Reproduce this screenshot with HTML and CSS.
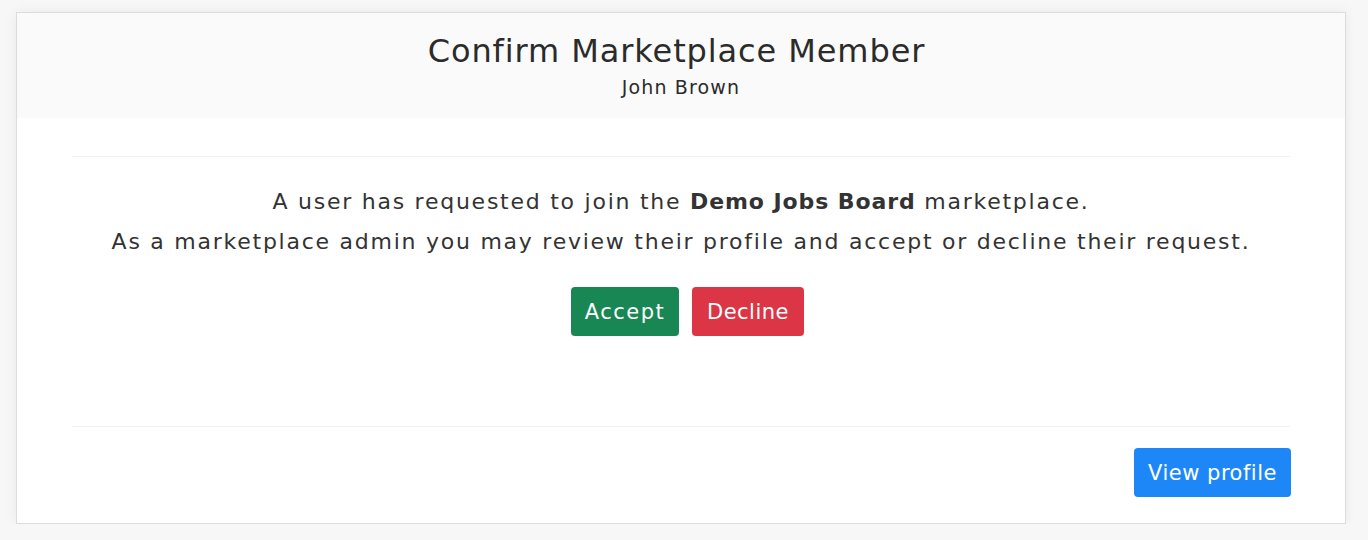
FILE: index.html
```html
<!DOCTYPE html>
<html>
<head>
<meta charset="utf-8">
<link rel="stylesheet" href="styles.css">
</head>
<body>
<div class="card">
  <div class="card-header">
    <h1 class="title">Confirm Marketplace Member</h1>
    <div class="subtitle">John Brown</div>
  </div>
  <div class="card-body">
    <hr class="rule">
    <div class="message">
      <p>A user has requested to join the <strong>Demo Jobs Board</strong> marketplace.</p>
      <p>As a marketplace admin you may review their profile and accept or decline their request.</p>
    </div>
    <div class="actions">
      <button class="btn btn-accept">Accept</button>
      <button class="btn btn-decline">Decline</button>
    </div>
    <hr class="rule rule-bottom">
    <div class="footer">
      <button class="btn btn-view">View profile</button>
    </div>
  </div>
</div>
</body>
</html>
```

FILE: styles.css
```css
html, body {
  margin: 0;
  padding: 0;
  background: #f7f7f7;
}
body {
  padding: 12px 22px 0 16px;
  font-family: "DejaVu Sans", "Liberation Sans", sans-serif;
  color: #333;
}
.card {
  background: #fff;
  border: 1px solid #dcdcdc;
  box-shadow: 0 0 12px rgba(0,0,0,0.06);
  height: 510px;
  display: flex;
  flex-direction: column;
}
.card-header {
  background: #fafafa;
  height: 105px;
  display: flex;
  flex-direction: column;
  align-items: center;
}
.title {
  margin: 18px 0 0;
  padding-right: 9px;
  font-weight: 400;
  font-size: 32px;
  line-height: 40px;
  letter-spacing: 0.9px;
  color: #2b2b2b;
}
.subtitle {
  font-size: 19px;
  line-height: 26px;
  margin-top: 3px;
  letter-spacing: 1.15px;
  color: #2b2b2b;
}
.card-body {
  padding: 0 55px;
  display: flex;
  flex-direction: column;
  flex: 1;
}
.rule {
  border: 0;
  border-top: 1px solid #f1f1f1;
  margin: 38px 0 0;
}
.message {
  margin-top: 25px;
  text-align: center;
  font-size: 22px;
  line-height: 40px;
  letter-spacing: 1.75px;
}
.message p { margin: 0; }
.message strong { font-weight: 700; letter-spacing: 0.9px; }
.actions {
  display: flex;
  justify-content: center;
  gap: 13px;
  margin-top: 25px;
  padding-left: 13px;
}
.btn {
  font-family: inherit;
  font-size: 21px;
  color: #fff;
  border: 0;
  border-radius: 4px;
  height: 49px;
  padding: 0;
}
.btn-accept { background: #198754; width: 108px; letter-spacing: 1.5px; }
.btn-decline { background: #dc3545; width: 112px; letter-spacing: 0.5px; }
.rule-bottom { margin-top: 90px; }
.footer {
  display: flex;
  justify-content: flex-end;
  margin-top: 21px;
  margin-right: -1px;
}
.btn-view { background: #1e87f8; width: 157px; letter-spacing: 0.5px; }
```
